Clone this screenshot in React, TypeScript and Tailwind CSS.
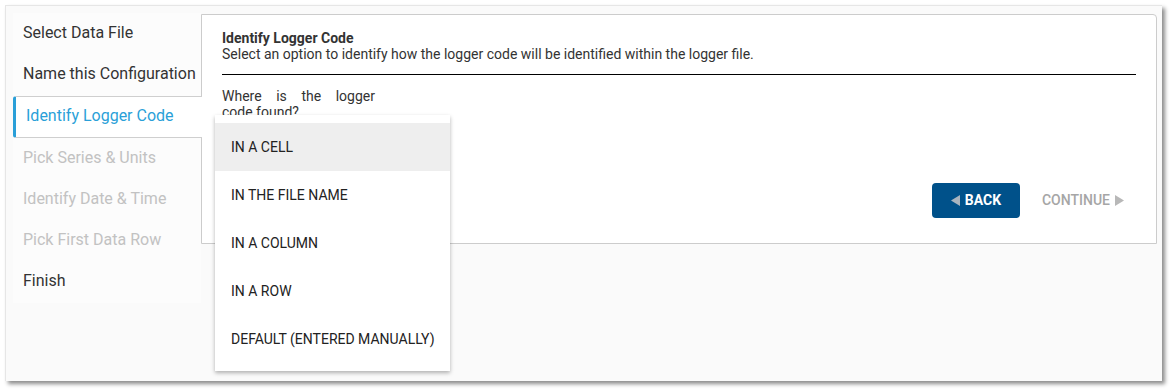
import React from "react";

const STEPS = [
  { label: "Select Data File", state: "done" },
  { label: "Name this Configuration", state: "done" },
  { label: "Identify Logger Code", state: "active" },
  { label: "Pick Series & Units", state: "todo" },
  { label: "Identify Date & Time", state: "todo" },
  { label: "Pick First Data Row", state: "todo" },
  { label: "Finish", state: "done" },
];

const OPTIONS = [
  "IN A CELL",
  "IN THE FILE NAME",
  "IN A COLUMN",
  "IN A ROW",
  "DEFAULT (ENTERED MANUALLY)",
];

function Tri({ dir, className }: { dir: "left" | "right"; className?: string }) {
  return (
    <svg width="9" height="11" viewBox="0 0 9 11" className={className}>
      {dir === "left" ? (
        <path d="M9 0 L9 11 L0 5.5 Z" fill="currentColor" />
      ) : (
        <path d="M0 0 L0 11 L9 5.5 Z" fill="currentColor" />
      )}
    </svg>
  );
}

export default function App() {
  return (
    <div className="w-[1171px] h-[390px] bg-white pt-[5px] pl-[5px] font-['Roboto',sans-serif]">
      <div className="relative w-[1157px] h-[376px] bg-[#fafafa] border-t border-l border-[#e6e6e6] shadow-[3px_3px_4px_rgba(0,0,0,0.45)] pt-[7px] pl-[7px]">
        <div className="flex items-start">
          <nav className="w-[188px] bg-[#fcfcfc] flex flex-col shrink-0 pb-[1px]">
            {STEPS.map((s) =>
              s.state === "active" ? (
                <div
                  key={s.label}
                  className="relative z-10 mt-[1px] w-[189px] h-[42px] flex items-center bg-white border-y border-[#cfcfcf] border-l-[3px] border-l-[#2a9fd8] rounded-l-[3px] pl-[10px] pb-[3px] text-[16px] text-[#2a9fd8]"
                >
                  {s.label}
                </div>
              ) : (
                <div
                  key={s.label}
                  className={
                    "h-[41px] flex items-center pl-[10px] pb-[2px] text-[16px] " +
                    (s.state === "todo" ? "text-[#c2c2c2]" : "text-[#333333]")
                  }
                >
                  {s.label}
                </div>
              ),
            )}
          </nav>

          <section className="mt-px w-[956px] h-[230px] bg-white border border-[#cccccc] rounded-tr-[4px] pl-[20px] pr-[20px] pt-[15px] pb-[25px] flex flex-col">
            <h2 className="text-[14px] leading-[16px] font-bold text-[#333333]">
              Identify Logger Code
            </h2>
            <p className="text-[14px] leading-[16px] text-[#333333]">
              Select an option to identify how the logger code will be identified within the logger file.
            </p>
            <hr className="mt-[12px] border-t border-black" />
            <p className="mt-[13px] w-[153px] text-[14px] leading-[16px] text-[#333333] text-justify">
              Where is the logger code found?
            </p>

            <div className="mt-auto flex items-center justify-end gap-[10px]">
              <button className="w-[88px] h-[35px] rounded-[4px] bg-[#00518a] flex items-center justify-center gap-[5px] text-[14px] font-bold text-white">
                <Tri dir="left" className="text-[#a9b4bf]" />
                BACK
              </button>
              <button className="h-[35px] px-[12px] flex items-center gap-[5px] text-[14px] font-medium text-[#a6a6a6]">
                CONTINUE
                <Tri dir="right" className="text-[#b8b8b8]" />
              </button>
            </div>
          </section>
        </div>

        <ul className="absolute z-20 left-[209px] top-[109px] w-[235px] bg-white py-[8px] shadow-[0_2px_4px_rgba(0,0,0,0.3)]">
          {OPTIONS.map((o, i) => (
            <li
              key={o}
              className={
                "h-[48px] flex items-center pl-[16px] text-[14px] text-[#222222] " +
                (i === 0 ? "bg-[#eeeeee]" : "")
              }
            >
              {o}
            </li>
          ))}
        </ul>
      </div>
    </div>
  );
}
